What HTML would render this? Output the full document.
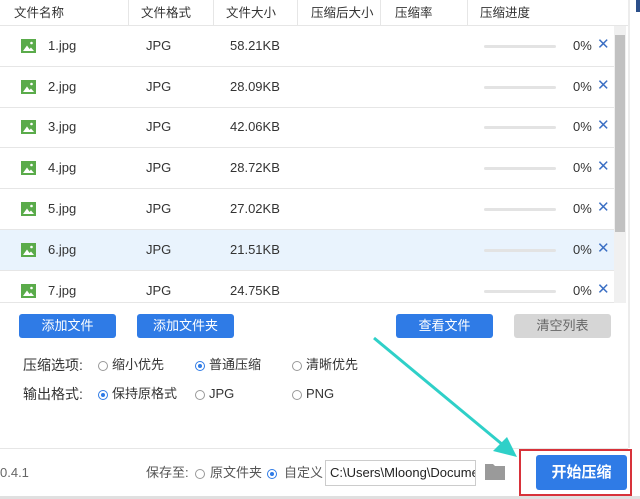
<!DOCTYPE html>
<html><head><meta charset="utf-8"><style>
*{margin:0;padding:0;box-sizing:border-box}
body{width:640px;height:499px;overflow:hidden;background:#fff;font-family:"Liberation Sans","Noto Sans CJK SC",sans-serif;color:#333;position:relative;font-size:13px;line-height:16px}
.a{position:absolute;white-space:nowrap}
.hd{color:#333;font-size:12.5px;top:5px}
.vl{position:absolute;top:0;height:25px;width:1px;background:#e6e6e6}
.row{position:absolute;left:0;width:614px;height:41px;border-bottom:1px solid #e6e6e6}
.row .a{top:12px}
.ic{position:absolute;left:21px;top:13px;width:15px;height:14px}
.bar{position:absolute;left:484px;top:19px;width:72px;height:3px;background:#e3e3e3;border-radius:2px}
.x{color:#3b6fc4;font-size:15px;left:597px;top:11px!important}
.btn{position:absolute;height:24px;top:314px;background:#2f7be6;color:#fff;font-size:13px;text-align:center;line-height:24px;border-radius:3px;width:97px}
.rd{position:absolute;width:10px;height:10px;border:1px solid #999;border-radius:50%;background:#fff}
.rd.on{border-color:#2f7be6}
.rd.on::after{content:"";position:absolute;left:2px;top:2px;width:4px;height:4px;border-radius:50%;background:#2f7be6}
</style></head><body>
<svg width="0" height="0" style="position:absolute"><defs><symbol id="im" viewBox="0 0 15 14"><rect width="15" height="14" fill="#5aab4a"/><circle cx="10.5" cy="4" r="1.3" fill="#fff"/><path d="M2 12L6 6.5 8.5 10 10 8.5 13 12z" fill="#fff"/></symbol></defs></svg>
<div class="a hd" style="left:14px">文件名称</div>
<div class="a hd" style="left:141px">文件格式</div>
<div class="a hd" style="left:226px">文件大小</div>
<div class="a hd" style="left:311px">压缩后大小</div>
<div class="a hd" style="left:395px">压缩率</div>
<div class="a hd" style="left:480px">压缩进度</div>
<div class="vl" style="left:128px"></div><div class="vl" style="left:213px"></div><div class="vl" style="left:297px"></div><div class="vl" style="left:380px"></div><div class="vl" style="left:467px"></div>
<div style="position:absolute;left:0;top:25px;width:628px;height:1px;background:#e6e6e6"></div>
<div style="position:absolute;left:628px;top:0;width:2px;height:448px;background:#ececec"></div>
<div style="position:absolute;left:636px;top:0;width:4px;height:12px;background:#2b4f8a"></div>
<div style="position:absolute;left:614px;top:26px;width:12px;height:277px;background:#f0f0f0"></div>
<div style="position:absolute;left:615px;top:35px;width:10px;height:197px;background:#c1c1c1"></div>

<div class="row" style="top:26px"><svg class="ic"><use href="#im"/></svg><div class="a" style="left:48px">1.jpg</div><div class="a" style="left:146px">JPG</div><div class="a" style="left:230px">58.21KB</div><div class="bar"></div><div class="a" style="left:573px">0%</div><div class="a x">✕</div></div>
<div class="row" style="top:67px"><svg class="ic"><use href="#im"/></svg><div class="a" style="left:48px">2.jpg</div><div class="a" style="left:146px">JPG</div><div class="a" style="left:230px">28.09KB</div><div class="bar"></div><div class="a" style="left:573px">0%</div><div class="a x">✕</div></div>
<div class="row" style="top:107px"><svg class="ic"><use href="#im"/></svg><div class="a" style="left:48px">3.jpg</div><div class="a" style="left:146px">JPG</div><div class="a" style="left:230px">42.06KB</div><div class="bar"></div><div class="a" style="left:573px">0%</div><div class="a x">✕</div></div>
<div class="row" style="top:148px"><svg class="ic"><use href="#im"/></svg><div class="a" style="left:48px">4.jpg</div><div class="a" style="left:146px">JPG</div><div class="a" style="left:230px">28.72KB</div><div class="bar"></div><div class="a" style="left:573px">0%</div><div class="a x">✕</div></div>
<div class="row" style="top:189px"><svg class="ic"><use href="#im"/></svg><div class="a" style="left:48px">5.jpg</div><div class="a" style="left:146px">JPG</div><div class="a" style="left:230px">27.02KB</div><div class="bar"></div><div class="a" style="left:573px">0%</div><div class="a x">✕</div></div>
<div class="row" style="top:230px;background:#e9f3fd"><svg class="ic"><use href="#im"/></svg><div class="a" style="left:48px">6.jpg</div><div class="a" style="left:146px">JPG</div><div class="a" style="left:230px">21.51KB</div><div class="bar"></div><div class="a" style="left:573px">0%</div><div class="a x">✕</div></div>
<div class="row" style="top:271px;height:32px;overflow:hidden"><svg class="ic"><use href="#im"/></svg><div class="a" style="left:48px">7.jpg</div><div class="a" style="left:146px">JPG</div><div class="a" style="left:230px">24.75KB</div><div class="bar"></div><div class="a" style="left:573px">0%</div><div class="a x">✕</div></div>

<div class="btn" style="left:19px">添加文件</div>
<div class="btn" style="left:137px">添加文件夹</div>
<div class="btn" style="left:396px">查看文件</div>
<div class="btn" style="left:514px;background:#d6d6d6;color:#666">清空列表</div>

<div class="a" style="left:23px;top:357px;font-size:14px">压缩选项:</div>
<div class="rd" style="left:98px;top:361px"></div><div class="a" style="left:112px;top:357px">缩小优先</div>
<div class="rd on" style="left:195px;top:361px"></div><div class="a" style="left:209px;top:357px">普通压缩</div>
<div class="rd" style="left:292px;top:361px"></div><div class="a" style="left:306px;top:357px">清晰优先</div>
<div class="a" style="left:23px;top:386px;font-size:14px">输出格式:</div>
<div class="rd on" style="left:98px;top:390px"></div><div class="a" style="left:112px;top:386px">保持原格式</div>
<div class="rd" style="left:195px;top:390px"></div><div class="a" style="left:209px;top:386px">JPG</div>
<div class="rd" style="left:292px;top:390px"></div><div class="a" style="left:306px;top:386px">PNG</div>

<div style="position:absolute;left:0;top:448px;width:628px;height:1px;background:#e6e6e6"></div>
<div class="a" style="left:0;top:465px;color:#666">0.4.1</div>
<div class="a" style="left:146px;top:465px;color:#555">保存至:</div>
<div class="rd" style="left:195px;top:469px"></div><div class="a" style="left:210px;top:465px;color:#555">原文件夹</div>
<div class="rd on" style="left:267px;top:469px"></div><div class="a" style="left:284px;top:465px;color:#555">自定义</div>
<div style="position:absolute;left:325px;top:460px;width:151px;height:26px;border:1px solid #ccc;overflow:hidden"><div class="a" style="left:4px;top:4px;color:#222">C:\Users\Mloong\Documents</div></div>
<svg class="a" style="left:484px;top:461px" width="22" height="20"><path d="M1 3h8l2 2h10v14H1z" fill="#9a9a9a"/></svg>
<div style="position:absolute;left:519px;top:449px;width:113px;height:47px;border:2px solid #d8323a"></div>
<div class="btn" style="left:536px;top:455px;width:91px;height:35px;line-height:35px;font-size:15px;font-weight:bold">开始压缩</div>
<svg class="a" style="left:0;top:0" width="640" height="499"><line x1="374" y1="338" x2="503" y2="445" stroke="#2fd0c8" stroke-width="3"/><polygon points="517,457 493,451 507,437" fill="#2fd0c8"/></svg>
<div style="position:absolute;left:0;top:496px;width:640px;height:3px;background:#e0e0e0"></div>
</body></html>
